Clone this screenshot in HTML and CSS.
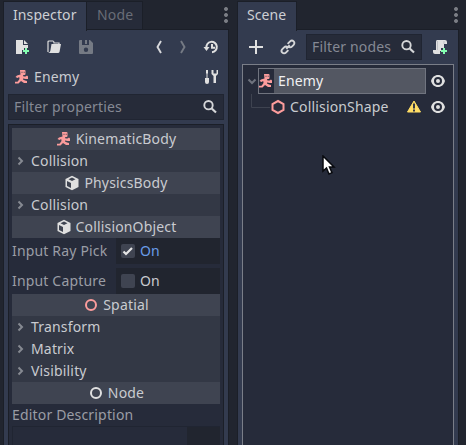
FILE: index.html
```
<!DOCTYPE html>
<html lang="en">
<head>
<meta charset="utf-8">
<title>Inspector and Scene docks</title>
<link rel="stylesheet" href="styles.css">
</head>
<body>
<svg width="0" height="0" class="defs">
  <defs>
    <symbol id="body" viewBox="0 0 16 16"><path d="M6 1h4.500q1 0 1 1v3q0 1-1 1H9l.5 1.500h2L13 6.500l1 1V10h-2.200L9 9.500v1l2 1 2 .5v2h-3L7 12l-2.500 2.500H1V12.700h2.500L5.500 10 5.200 8 3.500 9 1.500 8 3 6.500 6.500 5.500z" fill="#fc9c9c"/><path d="M7.500 2.700h1v1h-1zM9.700 2.700h1v1h-1zM3.300 10.200h1v1h-1z" fill="#3b404c"/></symbol>
    <symbol id="cube" viewBox="0 0 16 16"><path d="M8 .8 14.500 4v8L8 15.300 1.500 12V4z" fill="#e0e0e0"/><path d="M3 6l4 2v5l-4-2zM8 2.600l3.500 1.700L8 6 4.500 4.300z" fill="#3f4451"/></symbol>
    <symbol id="search" viewBox="0 0 16 16"><circle cx="6.500" cy="6.200" r="4.200" fill="none" stroke="#d5d6d8" stroke-width="1.900"/><path d="M9.700 9.500l4.300 4" stroke="#d5d6d8" stroke-width="2.200"/></symbol>
    <symbol id="eye" viewBox="0 0 16 16"><path d="M8 2C4.500 2 2 4.300 1 8c1 3.700 3.500 6 7 6s6-2.300 7-6c-1-3.700-3.500-6-7-6zm0 2a4 4 0 1 1 0 8 4 4 0 0 1 0-8zm0 2a2 2 0 1 0 0 4 2 2 0 0 0 0-4z" fill="#e0e0e0" fill-rule="evenodd"/></symbol>
    <symbol id="arrow" viewBox="0 0 8 10"><path d="M2.500 1.500 6 5 2.500 8.500" fill="none" stroke="#868a92" stroke-width="2"/></symbol>
    <symbol id="plus" viewBox="0 0 6 6"><path d="M2 0h2v2h2v2H4v2H2V4H0V2h2z" fill="#84ffb1"/></symbol>
  </defs>
</svg>
<main class="editor">
  <section class="dock inspector">
    <header class="tabs">
      <span class="tab active">Inspector</span><span class="tab">Node</span>
      <i class="dots"></i>
    </header>
    <div class="panel">
      <div class="tools">
        <svg width="16" height="16"><path d="M2 1h7v5h5v3h-4v2H8v4H2zM10 1l4 4h-4z" fill="#e0e0e0"/><use href="#plus" x="9" y="9" width="6" height="6"/></svg>
        <svg width="16" height="16"><path d="M2 13V3q0-1 1-1h4q1 0 1 2h5v2" fill="none" stroke="#e0e0e0" stroke-width="1.200"/><path d="M5.500 5H15l-1.500 8q-.3 1-1.500 1H2q2-.5 2.300-2z" fill="#e0e0e0"/></svg>
        <svg width="16" height="16" class="save"><path d="M2 1h2v5h7V1h1l3 3v10q0 1-1 1H2q-1 0-1-1V2q0-1 1-1zm5 0h2v4H7zm1 7.500a2.200 2.200 0 1 0 0 4.400 2.200 2.200 0 0 0 0-4.400z" fill="#757a84" fill-rule="evenodd"/></svg>
        <span class="spacer"></span>
        <svg width="8" height="16" class="prev"><path d="M6 2 2.500 8 6 14" fill="none" stroke="#d8d9dc" stroke-width="1.900"/></svg>
        <svg width="8" height="16" class="next"><path d="M2 2l3.500 6L2 14" fill="none" stroke="#757a84" stroke-width="1.900"/></svg>
        <svg width="16" height="16"><path d="M3.500 9A5.200 5.200 0 1 1 9 13.200M9 5v3.800h3" fill="none" stroke="#e0e0e0" stroke-width="2"/><path d="M.5 8h6l-3 4z" fill="#e0e0e0"/></svg>
      </div>
      <div class="object">
        <svg width="16" height="16"><use href="#body"/></svg><span class="t">Enemy</span>
        <span class="spacer"></span>
        <svg width="16" height="16"><path d="M3 1h2v3l-.5 1v4H6v4q0 2-2 2t-2-2V9h1.500V5L3 4zM8.500 1v4l2 2v7h2.500V7l2-2V1h-1.500v3.500h-3V1z" fill="#e0e0e0"/></svg>
      </div>
      <div class="field"><span class="t">Filter properties</span><svg width="16" height="16"><use href="#search"/></svg></div>
      <div class="props">
        <div class="cat"><svg width="16" height="16"><use href="#body"/></svg><span class="t">KinematicBody</span></div>
        <div class="group"><svg width="8" height="10"><use href="#arrow"/></svg><span class="t">Collision</span></div>
        <div class="cat"><svg width="16" height="16"><use href="#cube"/></svg><span class="t">PhysicsBody</span></div>
        <div class="group"><svg width="8" height="10"><use href="#arrow"/></svg><span class="t">Collision</span></div>
        <div class="cat"><svg width="16" height="16"><use href="#cube"/></svg><span class="t">CollisionObject</span></div>
        <div class="prop"><span class="label t">Input Ray Pick</span><span class="value changed"><i class="check"><svg width="14" height="14"><path d="M2.500 7.500 5 10l6-6" fill="none" stroke="#e6e6e6" stroke-width="2.200"/></svg></i><span class="t">On</span></span></div>
        <div class="prop second"><span class="label t">Input Capture</span><span class="value"><i class="check"></i><span class="t">On</span></span></div>
        <div class="cat"><svg width="16" height="16"><circle cx="8" cy="8" r="5" fill="none" stroke="#fc9c9c" stroke-width="2"/></svg><span class="t">Spatial</span></div>
        <div class="group"><svg width="8" height="10"><use href="#arrow"/></svg><span class="t">Transform</span></div>
        <div class="group"><svg width="8" height="10"><use href="#arrow"/></svg><span class="t">Matrix</span></div>
        <div class="group"><svg width="8" height="10"><use href="#arrow"/></svg><span class="t">Visibility</span></div>
        <div class="cat"><svg width="16" height="16"><circle cx="8" cy="8" r="5" fill="none" stroke="#e0e0e0" stroke-width="2"/></svg><span class="t">Node</span></div>
        <div class="desc t">Editor Description</div>
        <div class="memo"><div class="memo-text"></div></div>
      </div>
    </div>
  </section>
  <section class="dock scene">
    <header class="tabs"><span class="tab active">Scene</span><i class="dots"></i></header>
    <div class="panel">
      <div class="tools">
        <svg width="16" height="16"><path d="M8 1v14M1 8h14" stroke="#e0e0e0" stroke-width="2"/></svg>
        <svg width="16" height="16" class="link"><g transform="rotate(-45 8 8)" fill="none" stroke="#d5d6d8" stroke-width="1.900"><path d="M6 10.500H2.500a2.500 2.500 0 0 1 0-5H5A2.500 2.500 0 0 1 7.500 8M10 5.500h3.500a2.500 2.500 0 0 1 0 5H11A2.500 2.500 0 0 1 8.500 8M5.500 8h5"/></g></svg>
        <div class="field"><span class="t">Filter nodes</span><svg width="16" height="16"><use href="#search"/></svg></div>
        <svg width="16" height="16"><path d="M5 1h8q2 0 2 2v2h-3v4H9v3H8v3H3q-2 0-2-2v-2h3V3q0-2 1-2z" fill="#e0e0e0"/><path d="M5.500 2v9M12 2v3" stroke="#bfc1c5"/><use href="#plus" x="9" y="9" width="6" height="6"/></svg>
      </div>
      <div class="tree">
        <div class="node">
          <svg width="16" height="26" class="fold"><path d="M5.500 11.500 9 15l3.500-3.500" fill="none" stroke="#6f737e" stroke-width="2"/></svg>
          <div class="selected"><span class="pic"><svg width="16" height="16"><use href="#body"/></svg></span><span class="t">Enemy</span></div>
          <svg width="16" height="16" class="eye"><use href="#eye"/></svg>
        </div>
        <div class="node child">
          <svg width="27" height="26"><path d="M8.500 0v13.500H27" fill="none" stroke="#3e4350"/></svg>
          <svg width="16" height="16"><path d="M8 2 13.500 5v6L8 14 2.500 11V5z" fill="none" stroke="#fc9c9c" stroke-width="2"/></svg>
          <span class="t">CollisionShape</span><span class="spacer"></span>
          <svg width="16" height="16" class="warn"><path d="M8 2l6.500 11h-13z" fill="#ffdd65" stroke="#ffdd65" stroke-linejoin="round"/><path d="M8 4.500v5M8 10.500v2" stroke="#343845" stroke-width="2"/></svg>
          <svg width="16" height="16" class="eye"><use href="#eye"/></svg>
        </div>
      </div>
    </div>
  </section>
</main>
<svg class="cursor" width="14" height="22" viewBox="0 0 14 22"><path d="M1 1v15l3.500-3 2.500 6 3-1.300-2.500-5.700H12z" fill="#fff" stroke="#080a0e" stroke-width="1.500"/></svg>
</body>
</html>
```
FILE: styles.css
```
* { box-sizing: border-box; }
body {
  margin: 0;
  width: 466px;
  height: 445px;
  overflow: hidden;
  background: #21252f;
  font: 14px/20px "Noto Sans", sans-serif;
  letter-spacing: 0.17px;
  color: #c9cbd0;
}
svg { display: block; flex: none; }
.defs { position: absolute; }
.t { white-space: nowrap; }
.spacer { flex: 1; }
.editor { display: flex; height: 445px; padding-left: 3px; gap: 8px; }
.dock { display: flex; flex-direction: column; flex: none; height: 445px; }
.inspector { width: 226px; }
.scene { width: 222px; }
.tabs { display: flex; height: 30px; padding-top: 1px; flex: none; }
.tab {
  height: 28px;
  border: 1px solid #1b1f28;
  border-width: 1px 1px 0 0;
  background: #262b39;
  color: #696d77;
  padding: 3px 9px 0 10px;
  width: 56px;
}
.tab.active {
  position: relative;
  height: 30px;
  width: 84px;
  background: #333b4f;
  border-left-width: 1px;
  color: #cdcfd4;
  padding-left: 9px;
  letter-spacing: 0.1px;
}
.scene .tab.active { width: 60px; }
.dots {
  width: 4px;
  height: 16px;
  margin: 6px 1px 0 auto;
  background: radial-gradient(circle at 2px 2px, #7b7e85 1.500px, transparent 2.300px) 0 0 / 4px 6px;
}
.scene .dots { margin-right: -1px; }
.scene .tabs { width: 220px; }
.panel {
  flex: 1;
  min-height: 0;
  background: #333b4f;
  border: 1px solid #1b1f28;
  border-width: 1px 1px 0;
  margin-top: -1px;
  padding: 4px 4px 0;
  display: flex;
  flex-direction: column;
  gap: 4px;
}
.tools { display: flex; align-items: center; height: 26px; flex: none; padding: 0 6px; }
.inspector .tools svg + svg { margin-left: 16px; }
.inspector .tools .prev + .next { margin-left: 16px; }
.inspector .tools .next + svg { margin-left: 16px; }
.inspector .tools, .inspector .object { padding-right: 5px; }
.object { display: flex; align-items: center; height: 26px; flex: none; padding: 0 6px; }
.object .t { margin-left: 4px; }
.field {
  display: flex;
  align-items: center;
  justify-content: space-between;
  height: 26px;
  flex: none;
  background: #262b39;
  border: 1px solid #202532;
  padding: 0 5px;
  color: #858994;
}
.props {
  flex: 1;
  min-height: 0;
  overflow: hidden;
  border: 1px solid #1b1f28;
  border-bottom: 0;
  background: #262b3a;
  padding: 3px 3px 0;
}
.cat, .group { display: flex; align-items: center; height: 22px; }
.cat { justify-content: center; gap: 4px; background: #3f4451; }
.group { background: #333845; padding-left: 4px; gap: 7px; }
.prop { display: flex; height: 26px; color: #9a9da5; }
.prop.second { margin-top: 4px; }
.label { width: 104px; padding-top: 3px; }
.value { flex: 1; display: flex; align-items: center; gap: 5px; background: #21252f; padding-left: 5px; color: #c9cbd0; }
.changed { color: #699ce8; }
.check { width: 14px; height: 14px; background: #3f4451; border-radius: 2px; }
.desc { height: 22px; padding-top: 1px; color: #9a9da5; }
.memo { height: 20px; background: #21252f; border-top: 1px solid #202532; }
.memo-text { width: 175px; height: 19px; background: #262b3a; border-left: 1px solid #202532; }
.scene .link { margin-left: 16px; }
.scene .field { width: 116px; margin: 0 10px; }
.tree { flex: 1; background: #262b3a; border: 1px solid #7a7e88; border-bottom: 0; padding: 3px 7px 0 0; }
.node { display: flex; align-items: center; height: 26px; }
.fold { margin-right: -1px; }
.selected { display: flex; align-items: center; width: 168px; height: 26px; border: 1px solid #70747f; background: #535762; color: #f0f0f2; }
.pic { display: flex; align-items: center; width: 15px; height: 24px; background: #262b3a; margin-right: 4px; }
.pic svg { margin-left: -1px; }
.eye { margin-left: auto; }
.child .t { margin-left: 4px; }
.child .eye { margin-left: 8px; }
.cursor { position: absolute; left: 322px; top: 155px; }
```
